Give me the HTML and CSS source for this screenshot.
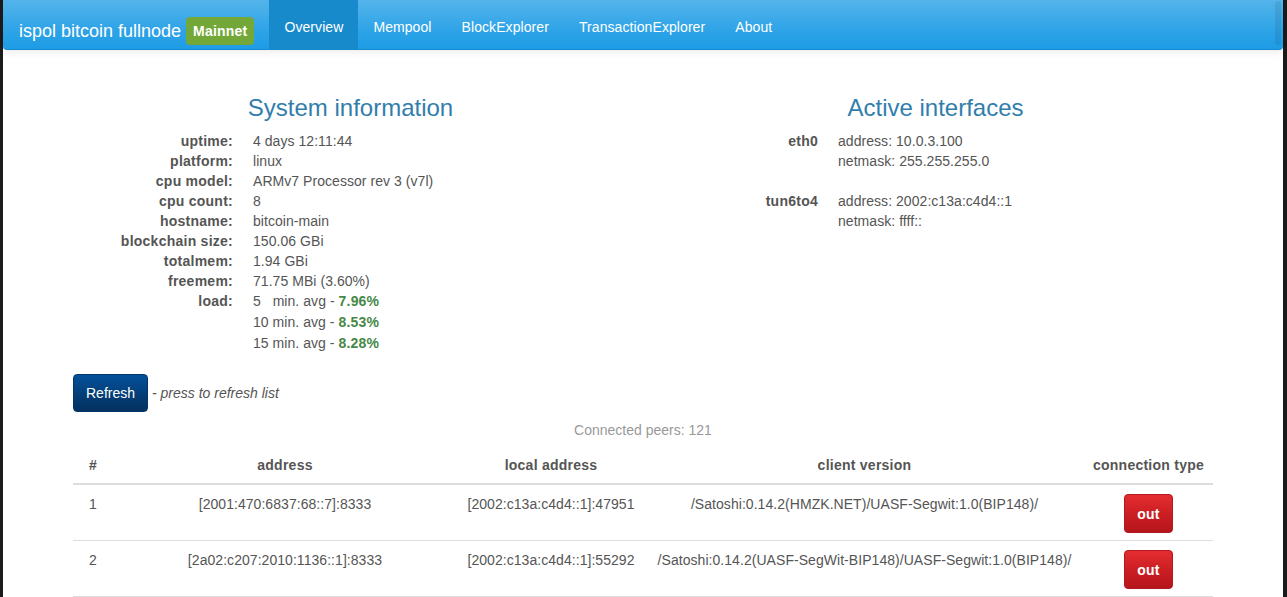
FILE: index.html
```html
<!DOCTYPE html>
<html lang="en">
<head>
<meta charset="utf-8">
<title>ispol bitcoin fullnode</title>
<link rel="stylesheet" href="styles.css">
</head>
<body>
<div class="page">
  <nav class="navbar">
    <div class="brand">ispol bitcoin fullnode <span class="badge">Mainnet</span></div>
    <ul class="nav">
      <li class="active"><a href="#">Overview</a></li>
      <li><a href="#">Mempool</a></li>
      <li><a href="#">BlockExplorer</a></li>
      <li><a href="#">TransactionExplorer</a></li>
      <li><a href="#">About</a></li>
    </ul>
    <span class="thumb"></span>
  </nav>

  <main class="container">
    <div class="row">
      <section class="col">
        <h3>System information</h3>
        <dl class="dl">
          <dt>uptime:</dt><dd>4 days 12:11:44</dd>
          <dt>platform:</dt><dd>linux</dd>
          <dt>cpu model:</dt><dd>ARMv7 Processor rev 3 (v7l)</dd>
          <dt>cpu count:</dt><dd>8</dd>
          <dt>hostname:</dt><dd>bitcoin-main</dd>
          <dt>blockchain size:</dt><dd>150.06 GBi</dd>
          <dt>totalmem:</dt><dd>1.94 GBi</dd>
          <dt>freemem:</dt><dd>71.75 MBi (3.60%)</dd>
          <dt>load:</dt>
          <dd class="load">
            <div>5&nbsp;&nbsp; min. avg - <b class="ok">7.96%</b></div>
            <div>10 min. avg - <b class="ok">8.53%</b></div>
            <div>15 min. avg - <b class="ok">8.28%</b></div>
          </dd>
        </dl>
      </section>
      <section class="col">
        <h3>Active interfaces</h3>
        <dl class="dl iface">
          <dt>eth0</dt><dd>address: 10.0.3.100<br>netmask: 255.255.255.0</dd>
          <dt>tun6to4</dt><dd>address: 2002:c13a:c4d4::1<br>netmask: ffff::</dd>
        </dl>
      </section>
    </div>

    <div class="refresh">
      <button class="btn btn-primary" type="button">Refresh</button>
      <em>- press to refresh list</em>
    </div>

    <p class="peers">Connected peers: 121</p>

    <table class="table">
      <colgroup>
        <col class="c-num"><col class="c-addr"><col class="c-local"><col class="c-client"><col class="c-type">
      </colgroup>
      <thead>
        <tr><th>#</th><th>address</th><th>local address</th><th>client version</th><th>connection type</th></tr>
      </thead>
      <tbody>
        <tr>
          <td>1</td><td>[2001:470:6837:68::7]:8333</td><td>[2002:c13a:c4d4::1]:47951</td>
          <td>/Satoshi:0.14.2(HMZK.NET)/UASF-Segwit:1.0(BIP148)/</td>
          <td><button class="btn btn-danger" type="button">out</button></td>
        </tr>
        <tr>
          <td>2</td><td>[2a02:c207:2010:1136::1]:8333</td><td>[2002:c13a:c4d4::1]:55292</td>
          <td>/Satoshi:0.14.2(UASF-SegWit-BIP148)/UASF-Segwit:1.0(BIP148)/</td>
          <td><button class="btn btn-danger" type="button">out</button></td>
        </tr>
      </tbody>
    </table>
  </main>
</div>
</body>
</html>
```

FILE: styles.css
```css
html, body {
  height: 100%;
  overflow: hidden;
}

body {
  margin: 0;
  background: #1b1b1b;
  font-family: "Liberation Sans", Arial, sans-serif;
  font-size: 14px;
  line-height: 20px;
  color: #555555;
}

.page {
  margin-left: 3px;
  width: 1280px;
  height: 100%;
  background: #ffffff;
}

/* Navbar */
.navbar {
  position: relative;
  display: flex;
  height: 50px;
  box-sizing: border-box;
  background-image: linear-gradient(#54b4eb, #2fa4e7 60%, #1d9ce5);
  border-bottom: 1px solid #178acc;
  border-radius: 0 0 4px 4px;
  box-shadow: 0 1px 10px rgba(0, 0, 0, 0.1);
  color: #ffffff;
}

.brand {
  padding: 17px 15px 12px 16px;
  font-size: 18px;
  line-height: 20px;
  white-space: nowrap;
}

.badge {
  display: inline-block;
  padding: 4px 7px;
  background: #73a839;
  border-radius: 4px;
  font-size: 14px;
  font-weight: bold;
  letter-spacing: 0.2px;
  line-height: 20px;
  vertical-align: 1px;
}

.nav {
  display: flex;
  margin: 0;
  padding: 0;
  list-style: none;
}

.nav li a {
  display: block;
  height: 49px;
  box-sizing: border-box;
  padding: 17px 15px 12px;
  color: #ffffff;
  text-decoration: none;
  letter-spacing: 0.08px;
}

.nav li.active a {
  background: #178acc;
}

.thumb {
  position: absolute;
  top: 1px;
  right: 2px;
  width: 6px;
  height: 44px;
  border-radius: 3px;
  background: rgba(0, 0, 0, 0.08);
}

/* Content */
.container {
  width: 1140px;
  margin: 0 auto;
  padding-top: 45px;
}

.row {
  display: grid;
  grid-template-columns: 1fr 1fr;
  column-gap: 30px;
  align-items: start;
}

h3 {
  margin: 0;
  font-size: 24px;
  font-weight: normal;
  line-height: 26px;
  text-align: center;
  color: #317eac;
}

.dl {
  display: grid;
  grid-template-columns: 160px 1fr;
  column-gap: 20px;
  margin: 10px 0 0;
}

.dl dt {
  font-weight: bold;
  text-align: right;
  white-space: nowrap;
  letter-spacing: 0.25px;
}

.dl dd {
  margin: 0;
  letter-spacing: 0.05px;
}

.dl dd.load {
  line-height: 21px;
}

.ok {
  color: #468847;
  letter-spacing: 0.2px;
}

.iface dd {
  margin-bottom: 20px;
}

/* Buttons */
.btn {
  font-family: inherit;
  font-size: 14px;
  line-height: 20px;
  color: #ffffff;
  border-radius: 4px;
  cursor: pointer;
}

.btn-primary {
  padding: 8px 12px;
  border: 1px solid #033769;
  background-image: linear-gradient(#04519b, #033c73 60%, #02325f);
}

.btn-danger {
  padding: 9px 12px 8px;
  border: 1px solid #b01a20;
  background-image: linear-gradient(#e42d30, #c71c22 60%, #b5161c);
  font-weight: bold;
  letter-spacing: 0.2px;
}

.refresh {
  display: flex;
  align-items: center;
  gap: 4px;
  margin-top: 20px;
}

.refresh em {
  color: #555555;
}

.peers {
  margin: 8px 0 0;
  text-align: center;
  color: #999999;
}

/* Table */
.table {
  width: 100%;
  margin-top: 7px;
  border-collapse: collapse;
  table-layout: fixed;
}

.c-num { width: 40px; }
.c-addr { width: 344px; }
.c-local { width: 188px; }
.c-client { width: 439px; }
.c-type { width: 129px; }

.table th,
.table td {
  text-align: center;
  vertical-align: top;
  white-space: nowrap;
}

.table th {
  padding: 8px;
  font-weight: bold;
  letter-spacing: 0.25px;
  border-bottom: 2px solid #dddddd;
}

.table td {
  padding: 9px 8px 7px;
  border-top: 1px solid #dddddd;
  letter-spacing: 0.05px;
}

.table tbody tr:last-child td {
  border-bottom: 1px solid #dddddd;
}

.table td:first-child,
.table th:first-child {
  text-align: left;
  padding-left: 16px;
}
```
